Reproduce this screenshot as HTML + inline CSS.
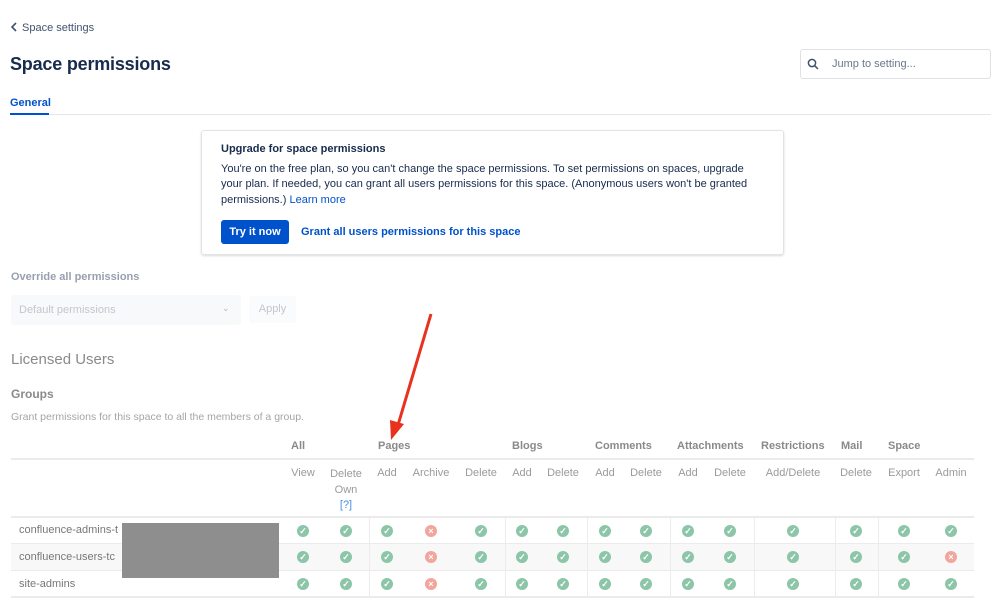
<!DOCTYPE html>
<html><head><meta charset="utf-8"><style>
*{margin:0;padding:0;box-sizing:border-box}
body{width:999px;height:616px;overflow:hidden;background:#fff;font-family:"Liberation Sans",sans-serif;position:relative;color:#172b4d}
.a{position:absolute;white-space:nowrap}
.h{font-size:11px;color:#8a8a8a;font-weight:bold;top:440px}
.s{font-size:11px;color:#9a9a9a;top:467px;text-align:center;transform:translateX(-50%)}
.ic{position:absolute;width:12px;height:12px;border-radius:50%;color:#fff;font-size:9px;line-height:12px;text-align:center;font-weight:bold;transform:translate(-50%,-50%)}
.g{background:#8cc5a8}.r{background:#f2a59c}
.vl{position:absolute;width:1px;background:#ececec;top:517px;height:80px}
.hl{position:absolute;left:11px;width:963px;height:1px;background:#ebebeb}
.nm{font-size:11px;color:#777;left:19px}
</style></head><body>
<div class="a" style="left:10px;top:22px;font-size:11px;color:#42526e"><svg width="8" height="10" style="vertical-align:-1px;margin-right:4px"><path d="M6 1L2 5l4 4" stroke="#42526e" stroke-width="1.6" fill="none"/></svg>Space settings</div>
<div class="a" style="left:10px;top:54px;font-size:18px;font-weight:bold;color:#172b4d;letter-spacing:-0.2px">Space permissions</div>
<div class="a" style="left:800px;top:49px;width:191px;height:30px;border:1px solid #dfe1e6;border-radius:3px"></div>
<svg class="a" style="left:807px;top:58px" width="12" height="12"><circle cx="5" cy="5" r="3.6" stroke="#42526e" stroke-width="1.5" fill="none"/><path d="M7.8 7.8L11 11" stroke="#42526e" stroke-width="1.5"/></svg>
<div class="a" style="left:832px;top:58px;font-size:11px;color:#6b778c">Jump to setting...</div>
<div class="a" style="left:10px;top:97px;font-size:11px;color:#0052cc;font-weight:bold">General</div>
<div class="a" style="left:10px;top:114px;width:981px;height:1px;background:#e4e6ee"></div>
<div class="a" style="left:10px;top:113px;width:39px;height:2px;background:#0052cc"></div>
<div class="a" style="left:201px;top:130px;width:583px;height:125px;border:1px solid #e3e3e3;border-radius:3px;box-shadow:0 1px 2px rgba(0,0,0,.15)"></div>
<div class="a" style="left:221px;top:143px;font-size:11px;font-weight:bold;color:#172b4d">Upgrade for space permissions</div>
<div class="a" style="left:221px;top:162px;font-size:11px;line-height:15.3px;color:#172b4d;white-space:normal;width:545px">You're on the free plan, so you can't change the space permissions. To set permissions on spaces, upgrade your plan. If needed, you can grant all users permissions for this space. (Anonymous users won't be granted permissions.) <span style="color:#0052cc">Learn more</span></div>
<div class="a" style="left:221px;top:220px;width:68px;height:24px;background:#0052cc;border-radius:3px;color:#fff;font-size:11px;font-weight:bold;text-align:center;line-height:24px">Try it now</div>
<div class="a" style="left:301px;top:226px;font-size:11px;font-weight:bold;color:#0052cc">Grant all users permissions for this space</div>
<div class="a" style="left:11px;top:271px;font-size:11px;font-weight:bold;color:#97a0af">Override all permissions</div>
<div class="a" style="left:11px;top:295px;width:230px;height:30px;background:#f8f9fa;border-radius:3px"></div>
<div class="a" style="left:19px;top:304px;font-size:11px;color:#c1c7d0">Default permissions</div>
<div class="a" style="left:222px;top:303px;font-size:9px;color:#b0b6c0">⌄</div>
<div class="a" style="left:249px;top:296px;width:47px;height:27px;background:#fafbfc;border-radius:3px;color:#c1c7d0;font-size:11px;text-align:center;line-height:27px">Apply</div>
<div class="a" style="left:11px;top:351px;font-size:15px;color:#8a8a8a">Licensed Users</div>
<div class="a" style="left:11px;top:387px;font-size:12px;font-weight:bold;color:#8a8a8a">Groups</div>
<div class="a" style="left:11px;top:411px;font-size:10.5px;color:#a5a5a5">Grant permissions for this space to all the members of a group.</div>
<div class="a h" style="left:291px">All</div>
<div class="a h" style="left:378px">Pages</div>
<div class="a h" style="left:512px">Blogs</div>
<div class="a h" style="left:595px">Comments</div>
<div class="a h" style="left:677px">Attachments</div>
<div class="a h" style="left:761px">Restrictions</div>
<div class="a h" style="left:841px">Mail</div>
<div class="a h" style="left:888px">Space</div>
<div class="hl" style="top:458px;height:2px"></div>
<div class="a s" style="left:303px">View</div>
<div class="a s" style="left:346px;line-height:15.5px">Delete<br>Own<br><span style="color:#4a90e2">[?]</span></div>
<div class="a s" style="left:387px">Add</div>
<div class="a s" style="left:431px">Archive</div>
<div class="a s" style="left:481px">Delete</div>
<div class="a s" style="left:522px">Add</div>
<div class="a s" style="left:563px">Delete</div>
<div class="a s" style="left:605px">Add</div>
<div class="a s" style="left:646px">Delete</div>
<div class="a s" style="left:688px">Add</div>
<div class="a s" style="left:730px">Delete</div>
<div class="a s" style="left:793px">Add/Delete</div>
<div class="a s" style="left:856px">Delete</div>
<div class="a s" style="left:904px">Export</div>
<div class="a s" style="left:951px">Admin</div>
<div class="a" style="left:11px;top:544px;width:963px;height:26px;background:#f8f8f8"></div>
<div class="hl" style="top:516px;height:2px"></div>
<div class="hl" style="top:543px"></div>
<div class="hl" style="top:570px"></div>
<div class="hl" style="top:596px;height:2px"></div>
<div class="vl" style="left:369px"></div><div class="vl" style="left:505px"></div><div class="vl" style="left:587px"></div><div class="vl" style="left:670px"></div><div class="vl" style="left:754px"></div><div class="vl" style="left:835px"></div><div class="vl" style="left:878px"></div>
<div class="a nm" style="top:524px">confluence-admins-t</div>
<div class="a nm" style="top:551px">confluence-users-tc</div>
<div class="a nm" style="top:578px">site-admins</div>
<div class="a" style="left:122px;top:523px;width:157px;height:55px;background:#8e8e8e"></div>
<div id="icons"></div>
<script>
var xs=[303,346,387,431,481,522,563,605,646,688,730,793,856,904,951],ys=[531,557,584],h='';
ys.forEach(function(y,ri){xs.forEach(function(x,ci){var red=ci==3||(ri==1&&ci==14);h+='<div class="ic '+(red?'r':'g')+'" style="left:'+x+'px;top:'+y+'px">'+(red?'×':'✓')+'</div>';});});
document.getElementById('icons').innerHTML=h;
</script>
<svg class="a" style="left:0;top:0" width="999" height="616"><line x1="431" y1="314" x2="398" y2="425" stroke="#e8321e" stroke-width="3"/><polygon points="391,440 390,420 404,424" fill="#e8321e"/></svg>
</body></html>
